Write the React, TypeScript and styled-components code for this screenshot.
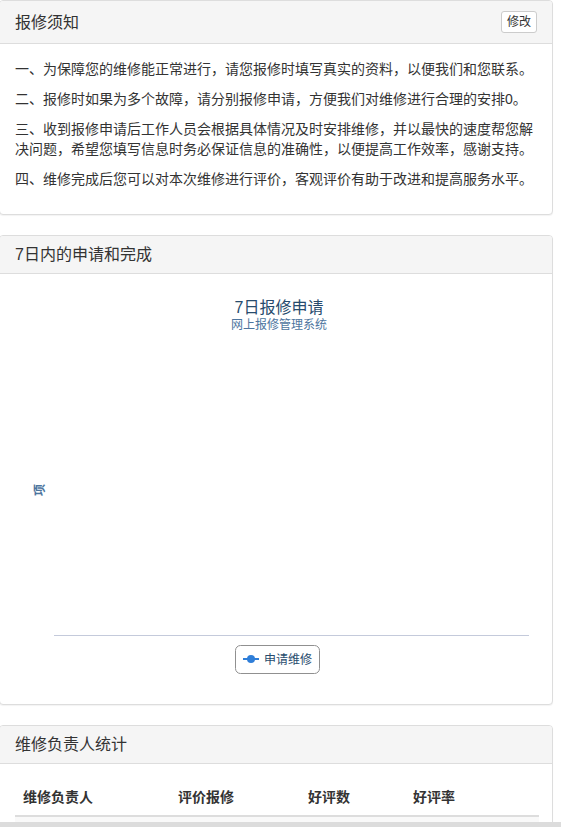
import React from "react";
import styled, { createGlobalStyle } from "styled-components";

const GlobalStyle = createGlobalStyle`
  html, body {
    margin: 0;
    padding: 0;
    background: #fff;
  }
  body {
    font-family: "Liberation Sans", "Noto Sans CJK SC", sans-serif;
    font-size: 14px;
    line-height: 20px;
    color: #333;
    overflow: hidden;
  }
`;

const Page = styled.div`
  width: 554px;
  margin-left: -1px;
`;

const Panel = styled.div`
  margin-bottom: 20px;
  background: #fff;
  border: 1px solid #ddd;
  border-radius: 4px;
  box-shadow: 0 1px 1px rgba(0, 0, 0, 0.05);
`;

const PanelHeading = styled.div`
  display: flex;
  align-items: center;
  justify-content: space-between;
  min-height: 17px;
  padding: 10px 15px;
  background: #f5f5f5;
  border-bottom: 1px solid #ddd;
  border-radius: 3px 3px 0 0;
`;

const PanelTitle = styled.h3`
  margin: 0;
  height: 17px;
  font-size: 16px;
  font-weight: normal;
  line-height: 17px;
  color: #333;
`;

const PanelBody = styled.div`
  padding: 15px;
`;

const SmallButton = styled.button`
  padding: 1px 5px;
  font-family: inherit;
  font-size: 12px;
  line-height: 18px;
  color: #333;
  background: #fff;
  border: 1px solid #ccc;
  border-radius: 3px;
  cursor: pointer;
`;

const Notice = styled.p`
  margin: 0 0 10px;
`;

const ChartBox = styled.div`
  height: 400px;
`;

const Table = styled.table`
  width: 100%;
  table-layout: fixed;
  border-collapse: collapse;
  border-spacing: 0;
  margin-bottom: 20px;
`;

const Th = styled.th<{ $w: number }>`
  box-sizing: border-box;
  width: ${(p) => p.$w}px;
  padding: 8px;
  text-align: left;
  font-weight: bold;
  line-height: 20px;
  border-bottom: 2px solid #ddd;
`;

const StripeRow = styled.tr`
  background: #f9f9f9;
`;

const Td = styled.td`
  padding: 8px;
  line-height: 20px;
  border-top: 1px solid #ddd;
`;

const BottomBar = styled.div`
  position: fixed;
  left: 0;
  right: 0;
  bottom: 0;
  height: 5px;
  background: #dcdcdc;
`;

const notices = [
  "一、为保障您的维修能正常进行，请您报修时填写真实的资料，以便我们和您联系。",
  "二、报修时如果为多个故障，请分别报修申请，方便我们对维修进行合理的安排0。",
  "三、收到报修申请后工作人员会根据具体情况及时安排维修，并以最快的速度帮您解决问题，希望您填写信息时务必保证信息的准确性，以便提高工作效率，感谢支持。",
  "四、维修完成后您可以对本次维修进行评价，客观评价有助于改进和提高服务水平。"
];

const chartFont = '"Liberation Sans", "Noto Sans CJK SC", sans-serif';

const Chart = () => (
  <svg width="524" height="400" viewBox="0 0 524 400">
    <text x="264" y="24" textAnchor="middle" fontSize="16" fill="#274b6d" fontFamily={chartFont}>
      7日报修申请
    </text>
    <text x="264" y="40" textAnchor="middle" fontSize="12" fill="#4d759e" fontFamily={chartFont}>
      网上报修管理系统
    </text>
    <text
      x="0"
      y="0"
      transform="translate(29 201) rotate(270)"
      textAnchor="middle"
      fontSize="12"
      fontWeight="bold"
      fill="#4d759e"
      fontFamily={chartFont}
    >
      项
    </text>
    <line x1="39" y1="346.5" x2="514" y2="346.5" stroke="#c4cadb" strokeWidth="1" />
    <rect x="220.5" y="356.5" width="84" height="28" rx="5" fill="#fff" stroke="#909090" />
    <line x1="228" y1="370" x2="244" y2="370" stroke="#2f7ed8" strokeWidth="2" />
    <circle cx="236" cy="370" r="4" fill="#2f7ed8" />
    <text x="249" y="375" fontSize="12" fill="#274b6d" fontFamily={chartFont}>
      申请维修
    </text>
  </svg>
);

export default function App() {
  return (
    <>
      <GlobalStyle />
      <Page>
        <Panel>
          <PanelHeading>
            <PanelTitle>报修须知</PanelTitle>
            <SmallButton>修改</SmallButton>
          </PanelHeading>
          <PanelBody>
            {notices.map((n) => (
              <Notice key={n}>{n}</Notice>
            ))}
          </PanelBody>
        </Panel>

        <Panel>
          <PanelHeading>
            <PanelTitle>7日内的申请和完成</PanelTitle>
          </PanelHeading>
          <PanelBody>
            <ChartBox>
              <Chart />
            </ChartBox>
          </PanelBody>
        </Panel>

        <Panel>
          <PanelHeading>
            <PanelTitle>维修负责人统计</PanelTitle>
          </PanelHeading>
          <PanelBody>
            <Table>
              <thead>
                <tr>
                  <Th $w={155}>维修负责人</Th>
                  <Th $w={130}>评价报修</Th>
                  <Th $w={105}>好评数</Th>
                  <Th $w={134}>好评率</Th>
                </tr>
              </thead>
              <tbody>
                <StripeRow>
                  <Td>&nbsp;</Td>
                  <Td />
                  <Td />
                  <Td />
                </StripeRow>
              </tbody>
            </Table>
          </PanelBody>
        </Panel>
      </Page>
      <BottomBar />
    </>
  );
}
